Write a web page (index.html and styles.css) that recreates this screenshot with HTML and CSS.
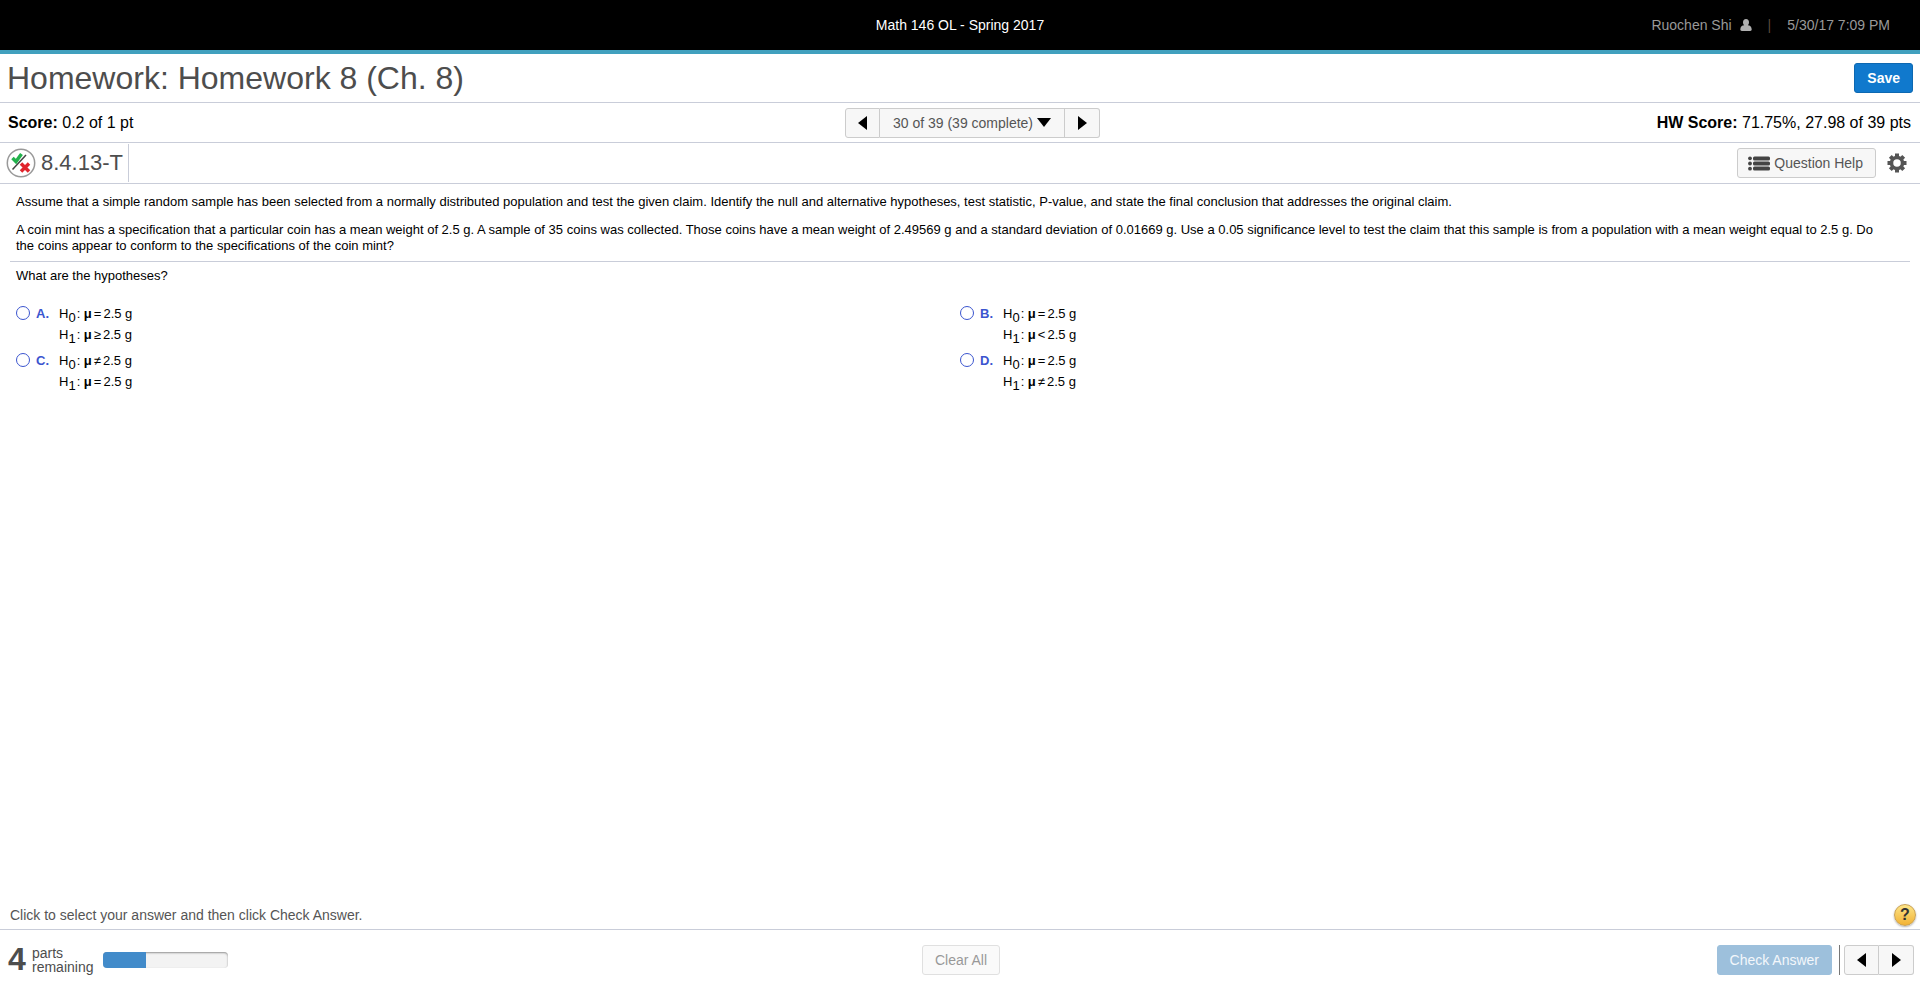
FILE: index.html
```html
<!DOCTYPE html>
<html lang="en">
<head>
<meta charset="utf-8">
<title>Homework 8 (Ch. 8)</title>
<link rel="stylesheet" href="styles.css">
</head>
<body>
    <header class="topbar">
        <div class="course">Math 146 OL - Spring 2017</div>
        <div class="user-info">
            <span>Ruochen Shi</span>
            <svg class="user-icon" width="12" height="12" viewBox="0 0 12 12"><path d="M6 0C4 0 3 1.400 3 3.300c0 1.300.5 2.300 1.200 3C2 6.300.5 7.400.3 10.300.3 11.500.8 12 1.800 12h8.400c1 0 1.500-.5 1.500-1.700C11.500 7.400 10 6.300 7.800 6.300 8.500 5.600 9 4.600 9 3.300 9 1.400 8 0 6 0z"/></svg>
            <span class="separator">|</span>
            <span>5/30/17 7:09 PM</span>
        </div>
    </header>

    <div class="title-row">
        <h1>Homework: Homework 8 (Ch. 8)</h1>
        <button type="button" class="btn btn-save">Save</button>
    </div>

    <div class="score-row">
        <div><b>Score:</b> 0.2 of 1 pt</div>
        <div class="btn-group">
            <button type="button" class="btn btn-arrow" aria-label="Previous question"><svg width="9" height="14" viewBox="0 0 9 14"><path d="M9 0v14L0 7z"/></svg></button>
            <button type="button" class="btn btn-list">30 of 39 (39 complete)<svg width="14" height="9" viewBox="0 0 14 9"><path d="M0 0h14L7 9z"/></svg></button>
            <button type="button" class="btn btn-arrow" aria-label="Next question"><svg width="9" height="14" viewBox="0 0 9 14"><path d="M0 0v14l9-7z"/></svg></button>
        </div>
        <div class="hw-score"><b>HW Score:</b> 71.75%, 27.98 of 39 pts</div>
    </div>

    <div class="question-row">
        <div class="question-id">
            <svg width="30" height="30" viewBox="0 0 30 30">
                <circle cx="15" cy="15" r="13.700" fill="#fff" stroke="#999" stroke-width="1.500"/>
                <path d="M6.500 21.500L20 7" stroke="#444" stroke-width="1.500"/>
                <path d="M6.500 10l3.500 3.500L15.500 6" fill="none" stroke="#22b14c" stroke-width="3.500"/>
                <path d="M15 15.500l8 8M23 15.500l-8 8" stroke="#e0242c" stroke-width="3.500"/>
            </svg>
            <h2>8.4.13-T</h2>
        </div>
        <div class="question-tools">
            <button type="button" class="btn btn-help">
                <svg width="22" height="15" viewBox="0 0 22 15" fill="#444"><circle cx="2" cy="2.300" r="1.900"/><circle cx="2" cy="7.500" r="1.900"/><circle cx="2" cy="12.700" r="1.900"/><rect x="5" y=".5" width="17" height="4" rx="1.500"/><rect x="5" y="5.500" width="17" height="4" rx="1.500"/><rect x="5" y="10.500" width="17" height="4" rx="1.500"/></svg>
                Question Help
            </button>
            <button type="button" class="btn-gear" aria-label="Settings">
                <svg width="20" height="20" viewBox="0 0 20 20">
                    <g stroke="#555" stroke-width="4"><path d="M10 .5v19M.5 10h19M3.300 3.300l13.400 13.400M16.700 3.300L3.300 16.700"/></g>
                    <circle cx="10" cy="10" r="5.500" fill="#fff" stroke="#555" stroke-width="3.500"/>
                </svg>
            </button>
        </div>
    </div>

    <main class="content">
        <div class="problem">
            <p>Assume that a simple random sample has been selected from a normally distributed population and test the given claim. Identify the null and alternative hypotheses, test statistic, P-value, and state the final conclusion that addresses the original claim.</p>
            <p>A coin mint has a specification that a particular coin has a mean weight of 2.5 g. A sample of 35 coins was collected. Those coins have a mean weight of 2.49569 g and a standard deviation of 0.01669 g. Use a 0.05 significance level to test the claim that this sample is from a population with a mean weight equal to 2.5 g. Do the coins appear to conform to the specifications of the coin mint?</p>
        </div>
        <p class="prompt">What are the hypotheses?</p>

        <form class="choices">
            <div class="choice">
                <input type="radio" name="answer" id="a">
                <label for="a"><b>A.</b><span class="hyp">H<sub>0</sub>: <i>μ</i><span class="op">=</span>2.5 g<br>H<sub>1</sub>: <i>μ</i><span class="op">≥</span>2.5 g</span></label>
            </div>
            <div class="choice">
                <input type="radio" name="answer" id="b">
                <label for="b"><b>B.</b><span class="hyp">H<sub>0</sub>: <i>μ</i><span class="op">=</span>2.5 g<br>H<sub>1</sub>: <i>μ</i><span class="op">&lt;</span>2.5 g</span></label>
            </div>
            <div class="choice">
                <input type="radio" name="answer" id="c">
                <label for="c"><b>C.</b><span class="hyp">H<sub>0</sub>: <i>μ</i><span class="op">≠</span>2.5 g<br>H<sub>1</sub>: <i>μ</i><span class="op">=</span>2.5 g</span></label>
            </div>
            <div class="choice">
                <input type="radio" name="answer" id="d">
                <label for="d"><b>D.</b><span class="hyp">H<sub>0</sub>: <i>μ</i><span class="op">=</span>2.5 g<br>H<sub>1</sub>: <i>μ</i><span class="op">≠</span>2.5 g</span></label>
            </div>
        </form>
    </main>

    <div class="hint">
        <span>Click to select your answer and then click Check Answer.</span>
        <button type="button" class="btn-question" aria-label="Help">?</button>
    </div>

    <footer class="footer">
        <div class="progress">
            <span class="count">4</span>
            <span class="parts">parts<br>remaining</span>
            <div class="bar"><div class="bar-fill"></div></div>
        </div>
        <button type="button" class="btn" disabled>Clear All</button>
        <div class="actions">
            <button type="button" class="btn btn-check" disabled>Check Answer</button>
            <div class="btn-group">
                <button type="button" class="btn btn-arrow" aria-label="Previous part"><svg width="9" height="14" viewBox="0 0 9 14"><path d="M9 0v14L0 7z"/></svg></button>
                <button type="button" class="btn btn-arrow" aria-label="Next part"><svg width="9" height="14" viewBox="0 0 9 14"><path d="M0 0v14l9-7z"/></svg></button>
            </div>
        </div>
    </footer>
</body>
</html>
```

FILE: styles.css
```css
* {
    box-sizing: border-box;
}

body {
    margin: 0;
    min-height: 100vh;
    display: flex;
    flex-direction: column;
    font-family: "Liberation Sans", Arial, sans-serif;
    font-size: 14px;
    color: #000;
    background-color: #fff;
}

h1, h2, p {
    margin: 0;
    font-weight: normal;
}

svg {
    display: block;
}

/* Top bar */
.topbar {
    display: grid;
    grid-template-columns: 1fr auto 1fr;
    align-items: center;
    height: 54px;
    padding: 0 30px;
    background-color: #000;
    border-bottom: 4px solid #41a0be;
}

.course {
    grid-column: 2;
    color: #fff;
}

.user-info {
    display: flex;
    align-items: center;
    justify-content: flex-end;
    color: #999;
}

.user-icon {
    margin-left: 8px;
    fill: #b0b0b0;
}

.separator {
    margin: 0 16px;
    color: #5a4a3c;
}

/* Buttons */
.btn {
    height: 30px;
    padding: 0 12px;
    font-family: inherit;
    font-size: 14px;
    color: #555;
    background-color: #f7f7f7;
    border: 1px solid #ccc;
    border-radius: 3px;
    cursor: pointer;
}

.btn:disabled {
    opacity: 0.6;
    cursor: default;
}

.btn-save {
    color: #fff;
    font-weight: bold;
    background-color: #1079cd;
    border-color: #0d68b1;
}

.btn-check,
.btn-check:disabled {
    color: #f3f7fb;
    background-color: #9dc0dc;
    border-color: #9dc0dc;
    opacity: 1;
}

.btn-group {
    display: flex;
}

.btn-group .btn {
    border-radius: 0;
}

.btn-group .btn + .btn {
    border-left: 0;
}

.btn-group .btn:first-child {
    border-radius: 3px 0 0 3px;
}

.btn-group .btn:last-child {
    border-radius: 0 3px 3px 0;
}

.btn-arrow {
    display: flex;
    align-items: center;
    justify-content: center;
    width: 35px;
    padding: 0;
}

.btn-list,
.btn-help {
    display: flex;
    align-items: center;
    gap: 4px;
}

.btn-list {
    padding: 0 13px;
}

.btn-help {
    padding: 0 12px 0 10px;
}

.btn-gear {
    padding: 0;
    background: none;
    border: 0;
    cursor: pointer;
}

/* Header rows */
.title-row,
.question-row {
    display: flex;
    align-items: center;
    justify-content: space-between;
    padding: 0 7px;
    border-bottom: 1px solid #c9cdd9;
}

.title-row {
    height: 49px;
}

.title-row h1 {
    font-size: 32px;
    color: #4d4d4d;
}

.score-row {
    display: grid;
    grid-template-columns: 1fr auto 1fr;
    align-items: center;
    height: 40px;
    padding: 0 9px 0 8px;
    font-size: 16px;
    border-bottom: 1px solid #c9cdd9;
}

.score-row .btn-group {
    margin-left: 26px;
}

.hw-score {
    text-align: right;
}

.question-row {
    height: 41px;
    padding-left: 6px;
}

.question-id {
    display: flex;
    align-items: center;
    gap: 5px;
    height: 38px;
    padding-right: 5px;
    border-right: 1px solid #c9cdd9;
}

.question-id h2 {
    font-size: 22px;
    color: #4d4d4d;
}

.question-tools {
    display: flex;
    align-items: center;
    gap: 11px;
    padding-right: 6px;
}

/* Question */
.content {
    flex: 1;
    padding: 0 10px;
    font-size: 13px;
    line-height: 16px;
}

.problem {
    padding: 10px 20px 7px 6px;
    border-bottom: 1px solid #c9cdd9;
}

.problem p + p {
    margin-top: 12px;
}

.prompt {
    padding: 6px;
}

.choices {
    display: grid;
    grid-template-columns: 1fr 1fr;
    row-gap: 5px;
    padding: 13px 6px 0;
}

.choice {
    display: flex;
    align-items: flex-start;
}

.choice input {
    appearance: none;
    width: 14px;
    height: 14px;
    margin: 3px 6px 0 0;
    background-color: #fff;
    border: 1px solid #3b55cf;
    border-radius: 50%;
}

.choice input:checked {
    background-color: #3b55cf;
    box-shadow: inset 0 0 0 3px #fff;
}

.choice label {
    display: flex;
    line-height: 21px;
}

.choice b {
    width: 23px;
    color: #3b55cf;
}

.hyp i {
    font-style: normal;
    font-weight: bold;
}

.hyp sub {
    margin-right: 1px;
    font-size: 13px;
    line-height: 0;
    vertical-align: -4px;
}

.op {
    margin: 0 2px;
}

/* Hint above the footer */
.hint {
    display: flex;
    align-items: center;
    justify-content: space-between;
    height: 28px;
    padding: 0 4px 0 10px;
    color: #555;
}

.btn-question {
    width: 22px;
    height: 22px;
    padding: 0;
    font-family: inherit;
    font-size: 16px;
    font-weight: bold;
    line-height: 20px;
    color: #333;
    background: linear-gradient(#fde588, #f2b234);
    border: 1px solid #c9a154;
    border-radius: 50%;
    box-shadow: 0 1px 2px rgba(0,0,0,0.3);
    cursor: pointer;
}

/* Footer */
.footer {
    display: grid;
    grid-template-columns: 1fr auto 1fr;
    align-items: center;
    height: 60px;
    padding: 0 6px 0 8px;
    color: #4d4d4d;
    border-top: 1px solid #c9cdd9;
}

.progress {
    display: flex;
    align-items: center;
}

.count {
    width: 24px;
    font-size: 32px;
    font-weight: bold;
}

.parts {
    line-height: 14px;
}

.bar {
    width: 125px;
    height: 16px;
    margin-left: 10px;
    overflow: hidden;
    background-color: #f3f3f3;
    border-radius: 4px;
    box-shadow: inset 0 1px 2px rgba(0,0,0,0.4);
}

.bar-fill {
    width: 34%;
    height: 100%;
    background-color: #428bca;
}

.actions {
    display: flex;
    justify-content: flex-end;
}

.actions .btn-group {
    margin-left: 7px;
    padding-left: 4px;
    border-left: 1px solid #777;
}
```
